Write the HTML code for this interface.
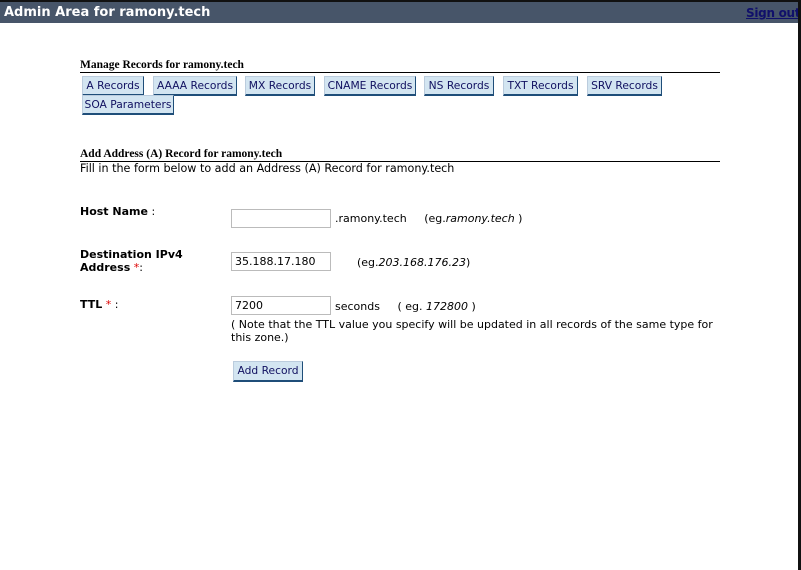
<!DOCTYPE html>
<html><head><style>
body{margin:0;width:801px;height:570px;background:#fff;position:relative;overflow:hidden;font-family:"DejaVu Sans",Verdana,sans-serif;font-size:11px;color:#000}
.a{position:absolute;white-space:nowrap}
.top{position:absolute;left:0;top:0;width:801px;height:2px;background:#111}
.hdr{position:absolute;left:0;top:2px;width:798px;height:21px;background:#475569}
.rb{position:absolute;right:0;top:0;width:3px;height:570px;background:#111}
.btn{position:absolute;height:17px;line-height:17px;background:#d3e5f1;border:1px solid #bcd;border-right:1px solid #1f4e79;border-bottom:2px solid #1f4e79;color:#101060;font-size:10.7px;text-align:center;box-sizing:content-box}
.ser{font-family:"Liberation Serif",serif;font-weight:bold;font-size:11.5px}
.line{position:absolute;left:80px;width:640px;height:1px;background:#000}
.inp{position:absolute;width:95px;height:17px;border:1px solid #bbb;font-size:11px;line-height:17px;padding-left:3px;box-sizing:content-box}
b{font-weight:bold}
.r{color:#d00}
</style></head><body>
<div class="top"></div>
<div class="hdr"></div>
<div class="a" style="left:4px;top:5px;color:#fff;font-weight:bold;font-size:13px">Admin Area for ramony.tech</div>
<div class="a" style="left:746px;top:6px;color:#10106a;font-weight:bold;font-size:12px;text-decoration:underline;letter-spacing:-0.3px">Sign out</div>
<div class="rb"></div>

<div class="a ser" style="left:80px;top:59px">Manage Records for ramony.tech</div>
<div class="line" style="top:72px"></div>
<div class="btn" style="left:82px;top:76px;width:60px">A Records</div>
<div class="btn" style="left:153px;top:76px;width:82px">AAAA Records</div>
<div class="btn" style="left:245px;top:76px;width:68px">MX Records</div>
<div class="btn" style="left:324px;top:76px;width:90px">CNAME Records</div>
<div class="btn" style="left:424px;top:76px;width:68px">NS Records</div>
<div class="btn" style="left:503px;top:76px;width:73px">TXT Records</div>
<div class="btn" style="left:587px;top:76px;width:73px">SRV Records</div>
<div class="btn" style="left:82px;top:95px;width:90px">SOA Parameters</div>

<div class="a ser" style="left:80px;top:148px">Add Address (A) Record for ramony.tech</div>
<div class="line" style="top:161px"></div>
<div class="a" style="left:80px;top:162px;font-size:11.15px">Fill in the form below to add an Address (A) Record for ramony.tech</div>

<div class="a" style="left:80px;top:205px"><b>Host Name</b> :</div>
<div class="inp" style="left:231px;top:209px"></div>
<div class="a" style="left:335px;top:212px">.ramony.tech &nbsp; &nbsp; (eg.<i>ramony.tech</i> )</div>

<div class="a" style="left:80px;top:248px;line-height:13px"><b>Destination IPv4<br>Address</b> <span class="r">*</span>:</div>
<div class="inp" style="left:231px;top:252px">35.188.17.180</div>
<div class="a" style="left:357px;top:256px">(eg.<i>203.168.176.23</i>)</div>

<div class="a" style="left:80px;top:298px"><b>TTL</b> <span class="r">*</span> :</div>
<div class="inp" style="left:231px;top:296px">7200</div>
<div class="a" style="left:335px;top:300px">seconds &nbsp; &nbsp; ( eg. <i>172800</i> )</div>
<div class="a" style="left:231px;top:318px;line-height:13px">( Note that the TTL value you specify will be updated in all records of the same type for<br>this zone.)</div>

<div class="btn" style="left:233px;top:361px;width:68px;height:18px;line-height:18px">Add Record</div>
</body></html>
